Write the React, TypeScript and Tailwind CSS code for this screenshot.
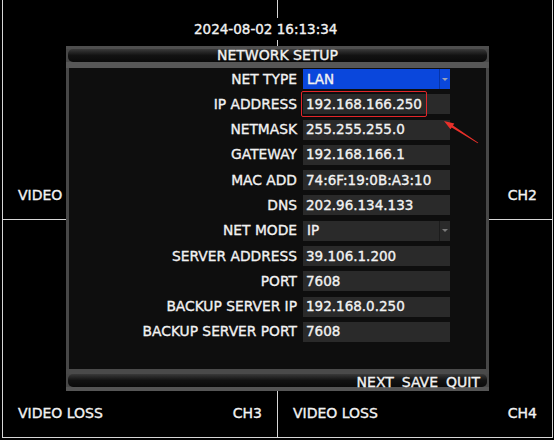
import React from "react";

const rows: { label: string; value: string; kind?: "blue" | "select" }[] = [
  { label: "NET TYPE", value: "LAN", kind: "blue" },
  { label: "IP ADDRESS", value: "192.168.166.250" },
  { label: "NETMASK", value: "255.255.255.0" },
  { label: "GATEWAY", value: "192.168.166.1" },
  { label: "MAC ADD", value: "74:6F:19:0B:A3:10" },
  { label: "DNS", value: "202.96.134.133" },
  { label: "NET MODE", value: "IP", kind: "select" },
  { label: "SERVER ADDRESS", value: "39.106.1.200" },
  { label: "PORT", value: "7608" },
  { label: "BACKUP SERVER IP", value: "192.168.0.250" },
  { label: "BACKUP SERVER PORT", value: "7608" },
];

function Cell({ left, ch }: { left?: string; ch?: string }) {
  return (
    <div className="bg-black flex items-end justify-between px-[15px] pb-[15px] text-[14px] leading-[17px]">
      <span>{left}</span>
      <span>{ch}</span>
    </div>
  );
}

function Field({ value, kind }: { value: string; kind?: "blue" | "select" }) {
  if (kind === "blue") {
    return (
      <div className="w-[147px] h-[20px] bg-[#0a47dc] flex items-center">
        <span className="flex-1 pl-[4px] text-[13.5px] leading-[17px]">{value}</span>
        <div className="w-[11px] h-full border-l border-[#0634a8] flex items-center justify-center">
          <div className="w-0 h-0 border-l-[3px] border-r-[3px] border-t-[3px] border-l-transparent border-r-transparent border-t-[#9aa3b8]" />
        </div>
      </div>
    );
  }
  if (kind === "select") {
    return (
      <div className="w-[147px] h-[20px] bg-[#2a2a2a] flex items-center">
        <span className="flex-1 pl-[4px] text-[13.5px] leading-[17px]">{value}</span>
        <div className="w-[11px] h-full border-l border-[#1c1c1c] flex items-center justify-center">
          <div className="w-0 h-0 border-l-[3px] border-r-[3px] border-t-[3px] border-l-transparent border-r-transparent border-t-[#7a7a7a]" />
        </div>
      </div>
    );
  }
  return (
    <div className="w-[147px] h-[20px] bg-[#2a2a2a] flex items-center pl-[3px] text-[13.5px] leading-[17px]">
      {value}
    </div>
  );
}

export default function App() {
  return (
    <div className="relative w-[554px] h-[440px] bg-black overflow-hidden text-[#f2f2f2] font-['DejaVu_Sans',sans-serif] [-webkit-text-stroke:0.35px_#f2f2f2]">
      <div className="ml-[2px] w-[551px] h-[438px] bg-[#d6d6d6] px-px pb-px grid grid-cols-2 grid-rows-[219px_217px] gap-px">
        <Cell left="VIDEO" />
        <Cell ch="CH2" />
        <Cell left="VIDEO LOSS" ch="CH3" />
        <Cell left="VIDEO LOSS" ch="CH4" />
      </div>

      <div className="absolute left-[190px] top-[18px] h-[22px] bg-black px-[4px] flex items-center text-[13.5px] leading-[17px]">
        2024-08-02 16:13:34
      </div>

      <div className="absolute left-[66px] top-[46px] w-[423px] h-[345px] bg-[#474747] flex flex-col">
        <div className="relative h-[22px] flex flex-col">
          <div className="h-[3px] bg-[#4e4e4e]" />
          <div className="mx-[2px] h-[13px] rounded-[5px] bg-gradient-to-b from-[#3a3a3a] via-[#121212] to-[#0a0a0a]" />
          <div className="flex-1 bg-[#575757]" />
          <div className="absolute inset-x-0 top-[1px] flex justify-center text-[14px] leading-[17px]">
            NETWORK SETUP
          </div>
        </div>

        <div className="flex-1 mx-[3px] bg-[#0e0e0e] pt-[1px] flex flex-col gap-[5.3px]">
          {rows.map((r) => (
            <div key={r.label} className="flex items-center h-[20px]">
              <div className="w-[228px] text-right text-[13.8px] leading-[17px]">{r.label}</div>
              <div className="ml-[6px]">
                <Field value={r.value} kind={r.kind} />
              </div>
            </div>
          ))}
        </div>

        <div className="relative h-[22px] flex flex-col">
          <div className="h-[5px] bg-[#4a4a4a]" />
          <div className="mx-[2px] h-[13px] rounded-[5px] bg-gradient-to-b from-[#3a3a3a] via-[#121212] to-[#0a0a0a]" />
          <div className="flex-1 bg-[#555555]" />
          <div className="absolute right-[9px] top-[4.5px] flex gap-[8px] text-[14px] leading-[17px]">
            <span>NEXT</span>
            <span>SAVE</span>
            <span>QUIT</span>
          </div>
        </div>
      </div>

      <div className="absolute left-[301px] top-[91px] w-[126px] h-[26px] border-[1.5px] border-[#e3262a] rounded-[2px]" />

      <svg className="absolute left-0 top-0 pointer-events-none" width="554" height="440" viewBox="0 0 554 440">
        <polygon
          points="444,121 454.3,123.5 453,125.4 478.3,142.7 477.7,143.3 451.7,127.4 450.5,129.3"
          fill="#e8302a"
        />
      </svg>
    </div>
  );
}
